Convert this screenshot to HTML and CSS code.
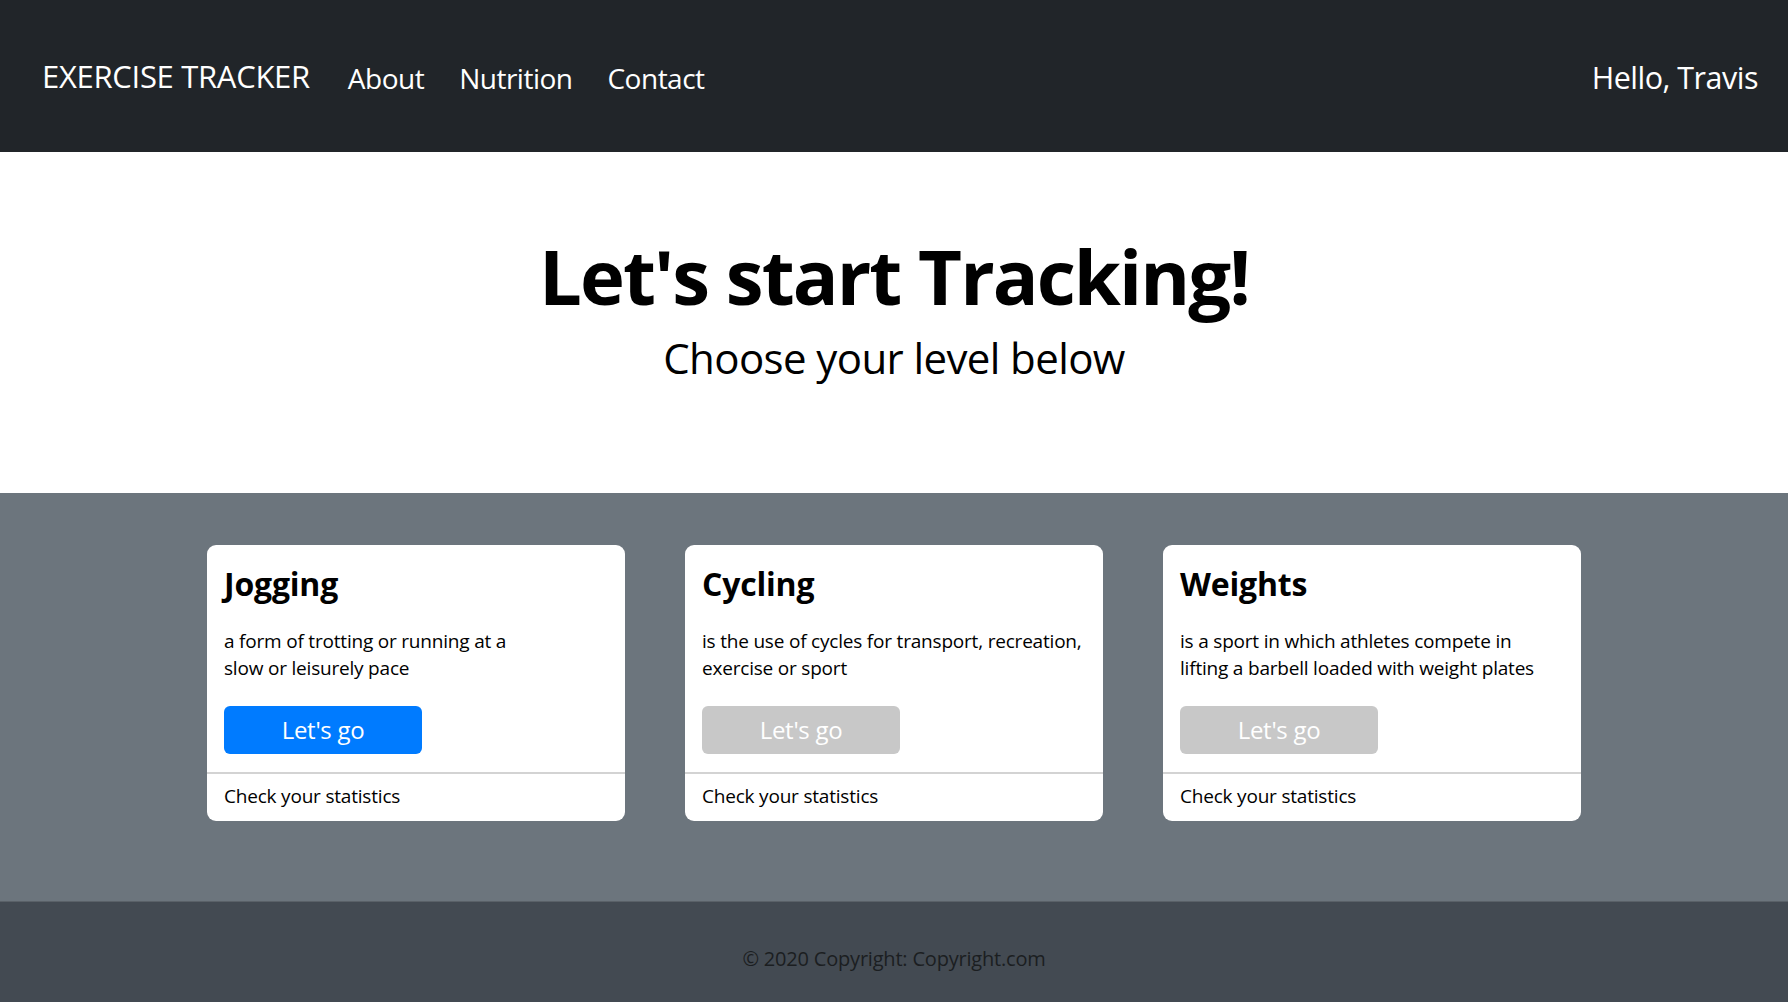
FILE: index.html
```html
<!DOCTYPE html>
<html lang="en">
<head>
<meta charset="utf-8">
<title>Exercise Tracker</title>
<link rel="stylesheet" href="styles.css">
</head>
<body>
<nav class="navbar">
  <a class="brand" href="#">EXERCISE TRACKER</a>
  <ul class="nav-links">
    <li><a href="#">About</a></li>
    <li><a href="#">Nutrition</a></li>
    <li><a href="#">Contact</a></li>
  </ul>
  <span class="greeting">Hello, Travis</span>
</nav>

<header class="hero">
  <h1 class="hero-title">Let's start Tracking!</h1>
  <p class="hero-sub">Choose your level below</p>
</header>

<main class="levels">
  <div class="card">
    <div class="card-body">
      <h2 class="card-title">Jogging</h2>
      <p class="card-text">a form of trotting or running at a<br>slow or leisurely pace</p>
      <button class="btn btn-primary">Let's go</button>
    </div>
    <div class="card-footer">Check your statistics</div>
  </div>
  <div class="card">
    <div class="card-body">
      <h2 class="card-title">Cycling</h2>
      <p class="card-text">is the use of cycles for transport, recreation, exercise or sport</p>
      <button class="btn btn-disabled">Let's go</button>
    </div>
    <div class="card-footer">Check your statistics</div>
  </div>
  <div class="card">
    <div class="card-body">
      <h2 class="card-title">Weights</h2>
      <p class="card-text">is a sport in which athletes compete in lifting a barbell loaded with weight plates</p>
      <button class="btn btn-disabled">Let's go</button>
    </div>
    <div class="card-footer">Check your statistics</div>
  </div>
</main>

<footer class="site-footer">© 2020 Copyright: Copyright.com</footer>
</body>
</html>
```
FILE: styles.css
```css
* { box-sizing: border-box; }
html, body { margin: 0; padding: 0; }
body {
  font-family: "Open Sans", "Noto Sans", sans-serif;
  color: #000;
  background: #fff;
}

.navbar {
  height: 152px;
  background: #212529;
  display: flex;
  align-items: center;
  padding: 0 30px 0 42px;
}
.brand {
  color: #fff;
  text-decoration: none;
  font-size: 31px;
  letter-spacing: -0.3px;
  margin-right: 38px;
}
.nav-links {
  list-style: none;
  margin: 0;
  padding: 0;
  display: flex;
  gap: 35px;
  flex: 1;
  padding-top: 3px;
}
.nav-links a {
  color: #fff;
  text-decoration: none;
  font-size: 28px;
  letter-spacing: -0.5px;
}
.greeting {
  color: #fff;
  font-size: 30.5px;
  letter-spacing: -0.5px;
  padding-top: 1px;
}

.hero {
  height: 341px;
  text-align: center;
  padding-top: 82px;
}
.hero-title {
  margin: 0;
  font-size: 76px;
  font-weight: 700;
  line-height: 1.1;
  letter-spacing: -1.95px;
}
.hero-sub {
  margin: 15px 0 0;
  font-size: 42px;
  line-height: 1.2;
  letter-spacing: -0.6px;
}

.levels {
  background: #6c757d;
  height: 408px;
  padding-top: 52px;
  display: flex;
  justify-content: center;
  align-items: flex-start;
  gap: 60px;
}
.card {
  width: 418px;
  background: #fff;
  border-radius: 9px;
  overflow: hidden;
}
.card-body {
  padding: 18px 17px 18px;
}
.card-title {
  margin: 0 0 23px;
  font-size: 32px;
  font-weight: 700;
  line-height: 1.3;
  letter-spacing: -0.2px;
}
.card-text {
  margin: 0 0 24px;
  font-size: 19px;
  line-height: 27px;
  letter-spacing: -0.2px;
}
.btn {
  width: 198px;
  height: 48px;
  border: none;
  border-radius: 6px;
  color: #fff;
  font-family: inherit;
  font-size: 24px;
  letter-spacing: -0.3px;
  cursor: pointer;
  display: block;
}
.btn-primary { background: #007bff; }
.btn-disabled { background: #c8c8c8; }
.card-footer {
  border-top: 2px solid #d3d3d3;
  padding: 9px 17px 11px;
  font-size: 19px;
  line-height: 27px;
  letter-spacing: -0.2px;
}

.site-footer {
  background: #434a52;
  border-top: 1px solid #5a6168;
  height: 101px;
  display: flex;
  align-items: center;
  justify-content: center;
  font-size: 20px;
  color: #1b1e21;
  padding-top: 12px;
  letter-spacing: -0.2px;
}
```
